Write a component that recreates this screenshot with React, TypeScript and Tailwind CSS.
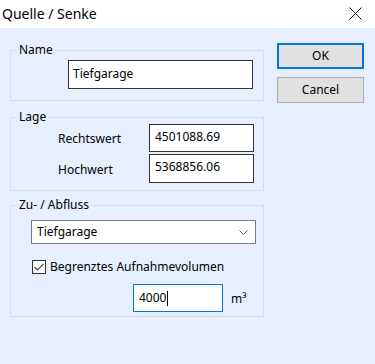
import React from "react";

const font = { fontFamily: '"Noto Sans", "Open Sans", sans-serif' };

function Group({ title, h, children, className = "" }: { title: string; h: string; children: React.ReactNode; className?: string }) {
  return (
    <div className={`relative border border-[#d9dce3] ${h} ${className}`}>
      <span className="absolute left-[6px] top-[-10px] bg-[#e7eefd] px-[2px] text-[12px] leading-[18px] text-black">{title}</span>
      {children}
    </div>
  );
}

export default function App() {
  return (
    <div className="w-[375px] h-[364px] bg-[#e7eefd] flex flex-col text-black" style={font}>
      <div className="h-[28px] bg-white flex items-center justify-between pl-[2px] pr-[13px] shrink-0">
        <span className="text-[14px] leading-[20px] text-black">Quelle / Senke</span>
        <svg width="13" height="13" viewBox="0 0 13 13" className="mt-[-2px]">
          <path d="M0.5 0.5 L12.5 12.5 M12.5 0.5 L0.5 12.5" stroke="#111" strokeWidth="1" fill="none" />
        </svg>
      </div>
      <div className="flex flex-row pl-[10px]">
        <div className="w-[254px] pt-[22px] flex flex-col">
          <Group title="Name" h="h-[51px]">
            <div className="ml-[57px] mt-[9px] w-[185px] h-[29px] bg-white border border-[#333] pl-[4px] flex items-center text-[12px] leading-[18px] pb-[2px]">Tiefgarage</div>
          </Group>
          <Group title="Lage" h="h-[74px]" className="mt-[16px]">
            <div className="flex flex-col mt-[6px] gap-[2px]">
              <div className="flex items-center">
                <span className="ml-[47px] w-[91px] text-[12px] leading-[18px] pt-[2px]">Rechtswert</span>
                <div className="w-[105px] h-[28px] bg-white border border-[#333] pl-[5px] pt-[3px] text-[12px] leading-[18px]">4501088.69</div>
              </div>
              <div className="flex items-center">
                <span className="ml-[47px] w-[91px] text-[12px] leading-[18px] pt-[2px]">Hochwert</span>
                <div className="w-[105px] h-[29px] bg-white border border-[#333] pl-[5px] pt-[3px] text-[12px] leading-[18px]">5368856.06</div>
              </div>
            </div>
          </Group>
          <Group title="Zu- / Abfluss" h="h-[112px]" className="mt-[14px]">
            <div className="ml-[20px] mt-[14px] w-[225px] h-[24px] bg-white border border-[#7a7a7a] flex items-center justify-between pl-[5px] pr-[7px]">
              <span className="text-[12px] leading-[18px]">Tiefgarage</span>
              <svg width="9" height="5" viewBox="0 0 9 5">
                <path d="M0.5 0.5 L4.5 4.5 L8.5 0.5" stroke="#555" strokeWidth="1" fill="none" />
              </svg>
            </div>
            <div className="flex items-center ml-[21px] mt-[14px]">
              <div className="w-[14px] h-[14px] bg-white border border-[#333] flex items-center justify-center">
                <svg width="10" height="8" viewBox="0 0 10 8">
                  <path d="M0.5 4 L3.5 7 L9.5 0.8" stroke="#444" strokeWidth="1.1" fill="none" />
                </svg>
              </div>
              <span className="ml-[4px] text-[12px] leading-[18px]">Begrenztes Aufnahmevolumen</span>
            </div>
            <div className="flex items-center ml-[122px] mt-[8px]">
              <div className="w-[90px] h-[28px] bg-white border border-[#0078d7] pl-[5px] flex items-center text-[12px] leading-[18px]">
                <span>4000</span>
                <span className="w-[1px] h-[15px] bg-black ml-[1px]" />
              </div>
              <span className="ml-[8px] text-[12px] leading-[18px] pt-[2px]">m³</span>
            </div>
          </Group>
        </div>
        <div className="ml-[13px] pt-[15px] w-[87px] flex flex-col gap-[8px]">
          <div className="h-[26px] bg-[#e1e1e1] border-2 border-[#0078d7] flex items-center justify-center text-[12px] leading-[18px]">OK</div>
          <div className="h-[26px] bg-[#e1e1e1] border border-[#adadad] flex items-center justify-center text-[12px] leading-[18px]">Cancel</div>
        </div>
      </div>
    </div>
  );
}
